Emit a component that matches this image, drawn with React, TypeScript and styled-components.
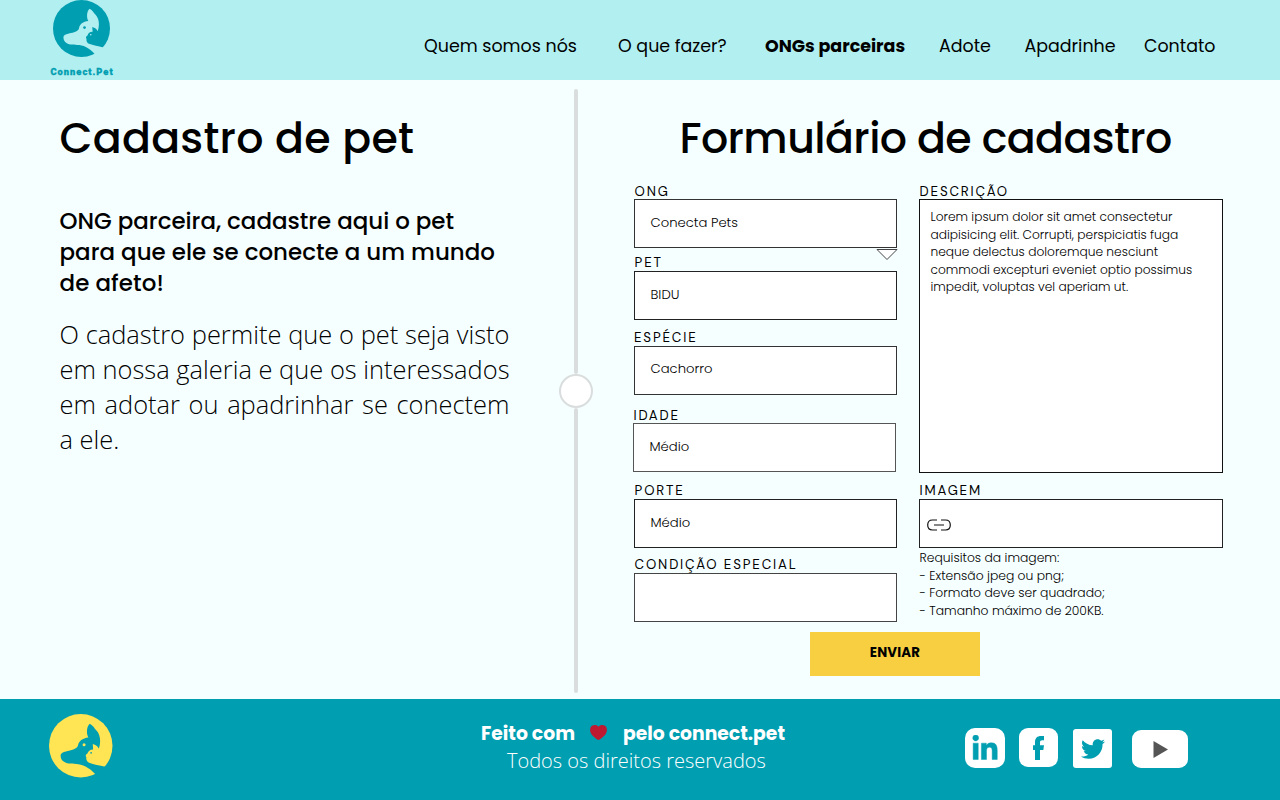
import React from "react";
import styled, { createGlobalStyle } from "styled-components";
import { FaLinkedinIn, FaTwitter } from "react-icons/fa";

const teal = "#009eb1";
const aqua = "#b1eff1";
const sans = `Poppins, Inter, "Liberation Sans", sans-serif`;

const GlobalStyle = createGlobalStyle`
  *, *::before, *::after { box-sizing: border-box; }
  body { margin: 0; background: #f6ffff; color: #000; font-family: ${sans}; }
  h1, h2, p, ul { margin: 0; padding: 0; font-weight: inherit; }
`;

const Page = styled.div`
  width: 1280px;
  height: 800px;
  display: flex;
  flex-direction: column;
  overflow: hidden;
`;

const Line = styled.span<{ $spacing?: number }>`
  display: block;
  white-space: nowrap;
  letter-spacing: ${(p) => p.$spacing ?? 0}px;
`;

/* Header */
const Header = styled.header`
  flex: none;
  height: 80px;
  display: flex;
  background: ${aqua};
`;

const Brand = styled.a`
  width: 163px;
  padding-top: 0.3px;
  display: flex;
  flex-direction: column;
  align-items: center;
  color: ${teal};
`;

const BrandName = styled.span`
  margin: 9px 0 0 1px;
  font: 900 9.3px/12px Roboto, sans-serif;
  letter-spacing: 1.02px;
  -webkit-text-stroke: 0.3px currentColor;
`;

const Nav = styled.nav`
  margin-left: 261px;
  display: grid;
  grid-template-columns: 194px 147px 174px 85.5px 119.5px 80px;
  align-items: center;
  padding-top: 12px;
`;

const NavLink = styled.a<{ $active?: boolean }>`
  font-size: 17.45px;
  line-height: 24px;
  white-space: nowrap;
  font-weight: ${(p) => (p.$active ? 700 : 400)};
`;

/* Main */
const Main = styled.main`
  flex: 1;
  display: flex;
`;

const Intro = styled.section`
  width: 558px;
  padding: 30px 0 0 59.5px;
`;

const Title = styled.h1`
  font-size: 42.7px;
  line-height: 56px;
  font-weight: 500;
`;

const Lead = styled.h2`
  margin-top: 40px;
  font-size: 22.95px;
  line-height: 31px;
  font-weight: 500;
`;

const Text = styled.p`
  width: 450px;
  margin-top: 18px;
  font: 300 25.45px/35px "Open Sans", sans-serif;
  text-align: justify;
`;

const Divider = styled.div`
  width: 36px;
  padding: 9px 0 6.5px;
  display: flex;
  flex-direction: column;
  align-items: center;
`;

const Rail = styled.i<{ $height?: number }>`
  width: 4px;
  border-radius: 2px;
  background: #dadddd;
  ${(p) => (p.$height ? `height: ${p.$height}px;` : "flex: 1;")}
`;

const Knob = styled.i`
  width: 34px;
  height: 34px;
  border: 2px solid #dadddd;
  border-radius: 50%;
  background: #fff;
`;

const FormSection = styled.section`
  padding: 30px 0 0 40px;
`;

const FormTitle = styled(Title)`
  padding-left: 45.5px;
`;

const Form = styled.form`
  display: grid;
  grid-template-columns: 263px 304px;
  column-gap: 22px;
  margin-top: 17px;
`;

const Column = styled.div`
  display: flex;
  flex-direction: column;
`;

const Field = styled.div<{ $after?: number; $shift?: number }>`
  position: relative;
  margin: 0 0 ${(p) => p.$after ?? 0}px ${(p) => p.$shift ?? 0}px;
`;

const Label = styled.label<{ $height?: number; $indent?: number }>`
  display: block;
  height: ${(p) => p.$height ?? 17}px;
  padding-left: ${(p) => p.$indent ?? 0.6}px;
  font-family: "DM Sans", ${sans};
  font-size: 13.3px;
  line-height: 17px;
  white-space: nowrap;
  letter-spacing: 1.84px;
`;

const Box = styled.div<{ $tone?: string; $lift?: number }>`
  width: 263px;
  height: 49px;
  display: flex;
  align-items: center;
  padding: 0 15.5px ${(p) => p.$lift ?? 2}px;
  border: 1px solid ${(p) => p.$tone ?? "#333"};
  background: #fff;
  font-size: 13.2px;
  font-weight: 300;
`;

const AreaBox = styled(Box)`
  width: 304px;
  height: 274px;
  display: block;
  padding: 8px 10.5px;
  border-color: #111;
  font-size: 12.22px;
  line-height: 17.5px;
`;

const FileBox = styled(Box)`
  width: 304px;
  padding: 2px 7px 0;
`;

const Notes = styled.div`
  margin: 1px 0 0 0.5px;
  font-size: 12.35px;
  font-weight: 300;
  line-height: 17.6px;
`;

const Caret = styled.svg`
  position: absolute;
  right: -1px;
  top: 65px;
`;

const Submit = styled.button`
  display: block;
  width: 170px;
  height: 44px;
  margin: 9.5px 0 0 175.5px;
  padding: 0 0 1px 1px;
  border: 0;
  background: #f8cf41;
  color: #000;
  font: 700 13.3px ${sans};
  letter-spacing: 0.2px;
`;

/* Footer */
const Footer = styled.footer`
  flex: none;
  height: 101px;
  display: grid;
  grid-template-columns: 481px 484px 1fr;
  background: ${teal};
  color: #fff;
`;

const FooterBrand = styled.div`
  padding: 15px 0 0 49px;
  color: #ffe454;
`;

const Credits = styled.div`
  padding-top: 22px;
`;

const MadeWith = styled.p`
  display: flex;
  align-items: center;
  height: 24px;
  font-size: 18.75px;
  font-weight: 700;
`;

const Heart = styled.svg`
  margin: 0 16.5px 2px 14.5px;
`;

const Rights = styled.p`
  margin: 2px 0 0 26px;
  font: 300 20px/28px "Open Sans", sans-serif;
`;

const Social = styled.div`
  display: flex;
  align-items: flex-start;
  padding-top: 29px;
`;

const Tile = styled.a<{ $w: number; $h: number; $radius: number; $left?: number; $top?: number }>`
  width: ${(p) => p.$w}px;
  height: ${(p) => p.$h}px;
  margin: ${(p) => p.$top ?? 0}px 0 0 ${(p) => p.$left ?? 0}px;
  border-radius: ${(p) => p.$radius}px;
  display: flex;
  align-items: center;
  justify-content: center;
  background: #fff;
  color: ${teal};
`;

const LinkedInMark = styled(FaLinkedinIn)`
  margin-top: 1px;
  stroke: currentColor;
  stroke-width: 8px;
`;

const Logo = ({ size, ground }: { size: number; ground: string }) => (
  <svg width={size} height={size} viewBox="56 57 190 190" display="block" aria-hidden="true">
    <circle cx="151" cy="152" r="95" fill="currentColor" />
    <path
      fill={ground}
      d="M91 180C92 172 104 170 116 167C131 163 141 160 143 150C145 138 156 129 174 127C167 117 168 94 178 86C188 91 191 99 198 106C210 118 212 141 205 161C202 153 196 150 187 147L188 163C178 163 173 168 171 175C165 178 165 183 168 187C166 193 170 200 176 203C190 208 207 211 224 215L240 232L206 253L195 237C184 224 163 209 144 207C126 205 112 208 101 200C94 196 90 188 91 180Z"
    />
    <circle cx="161" cy="149" r="4.5" fill="currentColor" />
    <circle cx="182" cy="173" r="2.6" fill={ground} />
  </svg>
);

const navItems = [
  { label: "Quem somos nós" },
  { label: "O que fazer?" },
  { label: "ONGs parceiras", active: true },
  { label: "Adote" },
  { label: "Apadrinhe" },
  { label: "Contato" },
];

const fields = [
  { label: "ONG", value: "Conecta Pets", height: 16, after: 6, select: true, tone: "#333" },
  { label: "PET", value: "BIDU", after: 9, tone: "#222" },
  { label: "ESPÉCIE", value: "Cachorro", after: 12, lift: 4, indent: -0.4, tone: "#333" },
  { label: "IDADE", value: "Médio", height: 16, after: 10, shift: -1, tone: "#555" },
  { label: "PORTE", value: "Médio", after: 8, tone: "#222" },
  { label: "CONDIÇÃO ESPECIAL", value: "", tone: "#444" },
];

export default function App() {
  return (
    <Page>
      <GlobalStyle />
      <Header>
        <Brand>
          <Logo size={57} ground={aqua} />
          <BrandName>Connect.Pet</BrandName>
        </Brand>
        <Nav>
          {navItems.map((n) => (
            <NavLink key={n.label} $active={n.active}>
              {n.label}
            </NavLink>
          ))}
        </Nav>
      </Header>

      <Main>
        <Intro>
          <Title>
            <Line $spacing={0.26}>Cadastro de pet</Line>
          </Title>
          <Lead>
            <Line>ONG parceira, cadastre aqui o pet</Line>
            <Line $spacing={0.03}>para que ele se conecte a um mundo</Line>
            <Line $spacing={0.1}>de afeto!</Line>
          </Lead>
          <Text>
            O cadastro permite que o pet seja visto em nossa galeria e que os interessados em adotar ou apadrinhar se
            conectem a&nbsp;ele.
          </Text>
        </Intro>

        <Divider>
          <Rail $height={285} />
          <Knob />
          <Rail />
        </Divider>

        <FormSection>
          <FormTitle>
            <Line $spacing={-0.58}>Formulário de cadastro</Line>
          </FormTitle>
          <Form>
            <Column>
              {fields.map((f) => (
                <Field key={f.label} $after={f.after} $shift={f.shift}>
                  <Label $height={f.height} $indent={f.indent}>
                    {f.label}
                  </Label>
                  <Box $tone={f.tone} $lift={f.lift}>
                    {f.value}
                  </Box>
                  {f.select && (
                    <Caret width="22" height="13" viewBox="0 0 22 13" fill="#fff" stroke="#444">
                      <path d="M1 1.5H21L11 11.5Z" />
                    </Caret>
                  )}
                </Field>
              ))}
            </Column>
            <Column>
              <Field $after={9}>
                <Label $height={16}>DESCRIÇÃO</Label>
                <AreaBox>
                  <Line>Lorem ipsum dolor sit amet consectetur</Line>
                  <Line>adipisicing elit. Corrupti, perspiciatis fuga</Line>
                  <Line>neque delectus doloremque nesciunt</Line>
                  <Line>commodi excepturi eveniet optio possimus</Line>
                  <Line>impedit, voluptas vel aperiam ut.</Line>
                </AreaBox>
              </Field>
              <Field>
                <Label>IMAGEM</Label>
                <FileBox $tone="#222">
                  <svg width="24" height="12" viewBox="0 0 24 12" fill="none" stroke="#111" strokeWidth="1.2">
                    <path d="M10 1H5.500C2.500 1 .7 3 .7 6S2.500 11 5.500 11H10M14 1H18.500C21.500 1 23.300 3 23.300 6S21.500 11 18.500 11H14M7 6H17" />
                  </svg>
                </FileBox>
                <Notes>
                  <Line>Requisitos da imagem:</Line>
                  <Line>- Extensão jpeg ou png;</Line>
                  <Line>- Formato deve ser quadrado;</Line>
                  <Line>- Tamanho máximo de 200KB.</Line>
                </Notes>
              </Field>
            </Column>
          </Form>
          <Submit type="button">ENVIAR</Submit>
        </FormSection>
      </Main>

      <Footer>
        <FooterBrand>
          <Logo size={63.5} ground={teal} />
        </FooterBrand>
        <Credits>
          <MadeWith>
            <Line>Feito com</Line>
            <Heart width="17" height="15" viewBox="0 0 17 15" fill="#be1931">
              <path d="M8.500 1.800C9.700-.3 13.200-.4 15 .8C17 2.200 17.300 5 16.500 7.200C15.300 10.500 11.500 13.500 8.500 15C5.500 13.500 1.700 10.500.5 7.200C-.3 5 0 2.200 2 .8C3.800-.4 7.300-.3 8.500 1.800Z" />
            </Heart>
            <Line>pelo connect.pet</Line>
          </MadeWith>
          <Rights>Todos os direitos reservados</Rights>
        </Credits>
        <Social>
          <Tile $w={40} $h={40} $radius={10}>
            <LinkedInMark size={28} />
          </Tile>
          <Tile $w={39} $h={39} $radius={9} $left={14}>
            <svg width="11" height="24" viewBox="249 75 33 72" fill="currentColor">
              <path d="M255 147V117H249V103H255V94C255 81 262 75 273 75H282V88H277C272 88 270 90 270 95V103H282L280 117H270V147Z" />
            </svg>
          </Tile>
          <Tile $w={39} $h={39} $radius={3} $left={15} $top={1}>
            <FaTwitter size={24} />
          </Tile>
          <Tile $w={56} $h={38} $radius={9} $left={20} $top={2}>
            <svg width="15" height="17" viewBox="0 0 15 17" fill="#555">
              <path d="M.5 0L15 8.500L.5 17Z" />
            </svg>
          </Tile>
        </Social>
      </Footer>
    </Page>
  );
}
